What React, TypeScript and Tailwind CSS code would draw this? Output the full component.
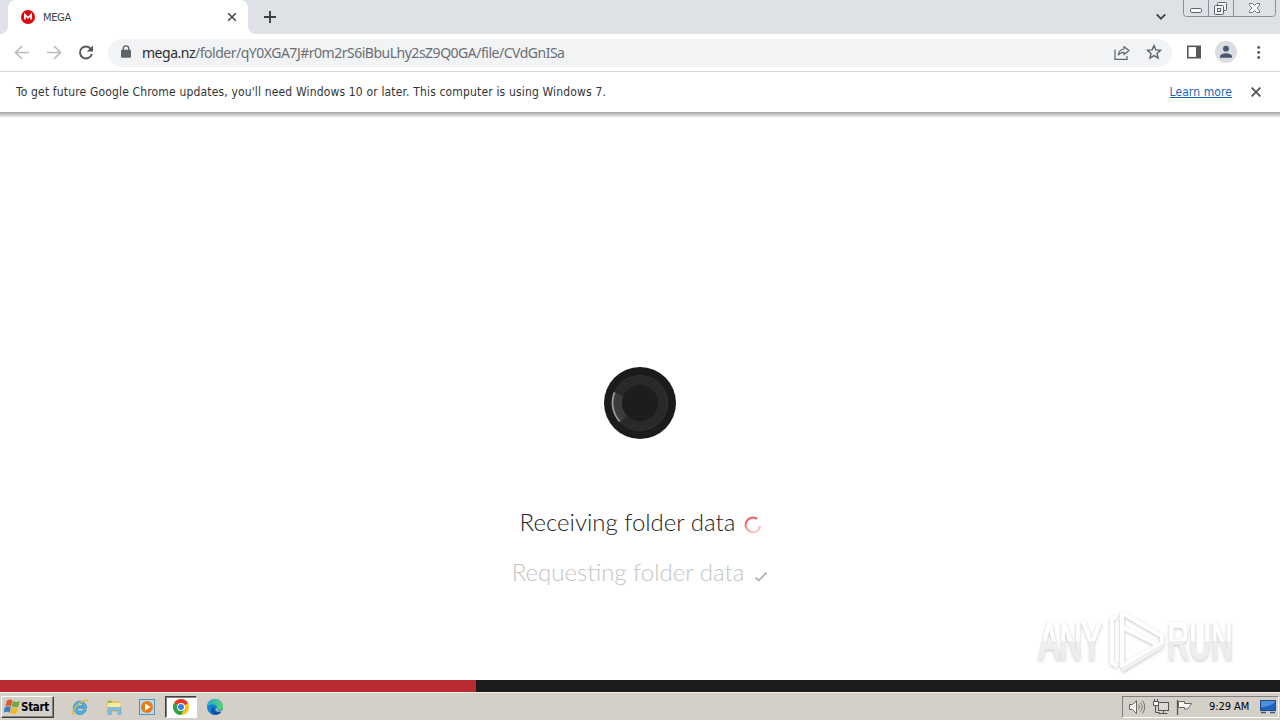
import React from "react";

const tahoma = "font-['DejaVu_Sans_Condensed','DejaVu_Sans',sans-serif]";

function TabStrip() {
  return (
    <div className="relative flex h-[34px] bg-[#dee1e6]">
      <svg className="w-2 h-[34px] shrink-0" viewBox="0 0 8 34">
        <path d="M8 26 A8 8 0 0 1 0 34 H8 Z" fill="#fff" />
      </svg>
      <div className="flex items-center w-60 h-full bg-white rounded-t-lg pl-[13px] pr-[11px]">
        <svg width="14" height="14" viewBox="0 0 14 14">
          <circle cx="7" cy="7" r="7" fill="#d9090f" />
          <path
            d="M3.9 9.6V4.7L7 7.8l3.1-3.1v4.9"
            fill="none"
            stroke="#fff"
            strokeWidth="1.7"
          />
        </svg>
        <span className="ml-2 mt-[2px] text-[11px] tracking-[-0.35px] text-[#3c4043]">
          MEGA
        </span>
        <svg className="ml-auto" width="10" height="10" viewBox="0 0 10 10">
          <path d="M1.2 1.2l7.6 7.6M8.8 1.2L1.2 8.8" stroke="#45494d" strokeWidth="1.6" />
        </svg>
      </div>
      <svg className="w-2 h-[34px] shrink-0" viewBox="0 0 8 34">
        <path d="M0 26 A8 8 0 0 0 8 34 H0 Z" fill="#fff" />
      </svg>
      <svg className="ml-2 mt-[11px]" width="12" height="12" viewBox="0 0 12 12">
        <path d="M6 0v12M0 6h12" stroke="#3c4043" strokeWidth="1.9" />
      </svg>
      <svg className="ml-auto mr-[17px] mt-[13px]" width="10" height="8" viewBox="0 0 10 8">
        <path d="M.7 1.4L5 5.7l4.3-4.3" fill="none" stroke="#3c4043" strokeWidth="1.7" />
      </svg>
      <svg className="mr-[3px]" width="94" height="18" viewBox="0 0 94 18">
        <path
          d="M.5 0v13.5q0 3 3 3h86q3 0 3-3V0M25.5 0v16M50.5 0v16"
          fill="none"
          stroke="#8d9096"
        />
        <rect x="7.5" y="8.5" width="11" height="4" rx="1" fill="#f7f8fa" stroke="#5f636b" />
        <g fill="#f1f3f5" stroke="#5f636b">
          <rect x="34.5" y="2.5" width="9" height="8" rx="1" />
          <rect x="31.5" y="5.5" width="9" height="9" rx="1" />
          <rect x="34.5" y="8.5" width="3" height="3" />
        </g>
        <path
          d="M66.5 3.5h3l2 2 2-2h3v2l-2.500 2.500 2.500 2.500v2h-3l-2-2-2 2h-3v-2l2.500-2.500-2.500-2.500z"
          fill="#f7f8fa"
          stroke="#777b82"
        />
      </svg>
    </div>
  );
}

function Toolbar() {
  return (
    <div className="flex items-center h-[38px] border-b border-[#d5d7da] bg-white">
      <svg className="ml-[14px]" width="16" height="16" viewBox="0 0 16 16">
        <path d="M15 7.500H2M8 1L1.500 7.500 8 14" fill="none" stroke="#b9bbbe" strokeWidth="1.700" />
      </svg>
      <svg className="ml-4" width="16" height="16" viewBox="0 0 16 16">
        <path d="M1 7.500h13M8 1l6.500 6.500L8 14" fill="none" stroke="#b9bbbe" strokeWidth="1.700" />
      </svg>
      <svg className="ml-4" width="16" height="16" viewBox="0 0 16 16">
        <path
          d="M13 4.200A6 6 0 1 0 13.800 8.900"
          fill="none"
          stroke="#55585c"
          strokeWidth="1.900"
        />
        <path d="M15 .4v6.200H8.800z" fill="#55585c" />
      </svg>
      <div className="flex items-center w-[1064px] h-7 ml-[14px] rounded-full bg-[#f1f3f4]">
        <svg className="ml-[13px] mb-px" width="10" height="14" viewBox="0 0 10 14">
          <path d="M2.300 5V3.600a2.700 2.700 0 0 1 5.400 0V5" fill="none" stroke="#5f6368" strokeWidth="1.400" />
          <rect x="0" y="4.700" width="10" height="8" rx="1" fill="#5f6368" />
        </svg>
        <span className="ml-[11px] text-[14px] tracking-[-0.49px] whitespace-nowrap text-[#6b6f74] font-['Noto_Sans','DejaVu_Sans',sans-serif]">
          <span className="text-[#2c2d30]">mega.nz</span>
          /folder/qY0XGA7J#r0m2rS6iBbuLhy2sZ9Q0GA/file/CVdGnISa
        </span>
        <svg className="ml-auto" width="16" height="16" viewBox="0 0 16 16">
          <path d="M1 4.500V14.400h12V11" fill="none" stroke="#5f6368" strokeWidth="1.200" />
          <path
            d="M10 1.700L15 5.500l-5 4V7.300c-2.700 0-4.300.8-5.700 2.700.4-3.500 2.300-5.600 5.700-6z"
            fill="none"
            stroke="#5f6368"
            strokeWidth="1.200"
            strokeLinejoin="round"
          />
        </svg>
        <svg className="ml-4 mr-[10px] mb-px" width="16" height="16" viewBox="0 0 16 16">
          <path
            d="M8 1.600l1.900 4.300 4.700.4-3.600 3.100 1.100 4.600L8 11.600 3.900 14 5 9.400 1.400 6.300l4.700-.4z"
            fill="none"
            stroke="#5f6368"
            strokeWidth="1.400"
          />
        </svg>
      </div>
      <svg className="ml-[15px] mb-px" width="14" height="14" viewBox="0 0 14 14">
        <rect x=".8" y="1.300" width="12.400" height="11.400" fill="none" stroke="#55585c" strokeWidth="1.600" />
        <path d="M9 1h5v12H9z" fill="#55585c" />
      </svg>
      <svg className="ml-[14px] mb-px" width="22" height="22" viewBox="0 0 22 22">
        <circle cx="11" cy="11" r="11" fill="#dadde2" />
        <circle cx="11" cy="7.700" r="2.900" fill="#4a5672" />
        <path d="M5 16.800v-1.500c0-2 4-3.100 6-3.100s6 1.100 6 3.100v1.500z" fill="#4a5672" />
      </svg>
      <svg className="ml-5" width="4" height="16" viewBox="0 0 4 16">
        <circle cx="1.700" cy="2.500" r="1.400" fill="#55585c" />
        <circle cx="1.700" cy="7.500" r="1.400" fill="#55585c" />
        <circle cx="1.700" cy="12.500" r="1.400" fill="#55585c" />
      </svg>
    </div>
  );
}

function InfoBar() {
  return (
    <div className="flex items-center h-10 pl-4 pr-[19px] text-[12px] text-[#333437] bg-white">
      <span className="tracking-[0.16px] whitespace-nowrap">
        To get future Google Chrome updates, you'll need Windows 10 or later.
        This computer is using Windows 7.
      </span>
      <a className="ml-auto mr-[19px] tracking-[0.1px] text-[#1967b8] underline whitespace-nowrap">
        Learn more
      </a>
      <svg width="10" height="10" viewBox="0 0 10 10">
        <path d="M.6.6l8.800 8.800M9.400.6L.6 9.400" stroke="#55585c" strokeWidth="1.900" />
      </svg>
    </div>
  );
}

function Loader() {
  return (
    <svg width="72" height="72" viewBox="0 0 72 72">
      <circle cx="36" cy="36" r="36" fill="#1b1b1b" />
      <circle cx="36" cy="36" r="27.500" fill="#292929" stroke="#333" />
      <path d="M10.100 25.200A28 28 0 0 0 15.800 55.400L23 49A18 18 0 0 1 19.200 29.500z" fill="#3c3c3c" />
      <circle cx="36" cy="36" r="18" fill="#1d1d1d" />
      <path
        d="M10.600 25.400A27.500 27.500 0 0 0 15.700 54.300"
        fill="none"
        stroke="#999"
        strokeWidth="1.800"
      />
    </svg>
  );
}

function Watermark() {
  return (
    <svg
      className="absolute left-[1028px] top-[600px]"
      width="230"
      height="84"
      viewBox="0 0 230 84"
    >
      <defs>
        <filter id="glow" x="-10%" y="-10%" width="120%" height="130%">
          <feDropShadow dx="0" dy="1" stdDeviation="1.500" floodColor="#555" floodOpacity=".38" />
        </filter>
        {/* letters: white on top, light grey below the middle */}
        <linearGradient id="fade" x1="0" y1="-38" x2="0" y2="0" gradientUnits="userSpaceOnUse">
          <stop offset=".52" stopColor="#fff" />
          <stop offset=".54" stopColor="#eee" />
        </linearGradient>
      </defs>
      <g filter="url(#glow)">
        <g
          fill="url(#fade)"
          stroke="url(#fade)"
          strokeWidth="1.600"
          fontFamily="'Liberation Sans', sans-serif"
          fontSize="52"
        >
          <text transform="translate(11 59) scale(.59 1)">ANY</text>
          <text transform="translate(139.500 59) scale(.58 1)">RUN</text>
        </g>
        <g fill="none" stroke="#fff" strokeWidth="4" strokeLinejoin="round">
          <path d="M94 62V13l40 23v7L94 66z" />
          <path d="M88 18h-4v45l5 3" />
          <path d="M94 27l34 17" />
          <path d="M94 70l40-24" stroke="#f1f1f1" />
        </g>
      </g>
    </svg>
  );
}

function Page() {
  return (
    <div className="flex flex-col items-center h-[568px] bg-white">
      <div className="w-full h-[6px] shrink-0 bg-linear-to-b from-[#a5a5a5] to-white" />
      <div className="mt-[249px]">
        <Loader />
      </div>
      <div className="flex items-center h-9 mt-[65px] pl-[2px] font-['Lato',sans-serif] font-light text-[24px] text-[#222]">
        <span className="whitespace-nowrap">Receiving folder data</span>
        <svg className="ml-[9px] mt-[6px]" width="18" height="18" viewBox="0 0 18 18">
          <defs>
            <linearGradient id="spin" x1="0" y1="0" x2=".5" y2="1">
              <stop offset="0" stopColor="#ed4a50" />
              <stop offset="1" stopColor="#f9c8cb" />
            </linearGradient>
          </defs>
          <path
            d="M13.300 3A7.300 7.300 0 1 0 16.200 10"
            fill="none"
            stroke="url(#spin)"
            strokeWidth="2.200"
          />
        </svg>
      </div>
      <div className="flex items-center h-9 mt-[14px] font-['Lato',sans-serif] font-light text-[24px] text-[#c4c4c4]">
        <span className="whitespace-nowrap">Requesting folder data</span>
        <svg className="ml-[10px] mt-[10px]" width="14" height="12" viewBox="0 0 14 12">
          <path d="M1.500 6.500l3.300 3L12.500 1.500" fill="none" stroke="#b5b5b5" strokeWidth="1.900" />
        </svg>
      </div>
    </div>
  );
}

function WindowsFlag() {
  return (
    <svg width="17" height="16" viewBox="0 0 17 16">
      <path d="M3 1.500c2-1.300 4-1.100 5.500 0L7.200 7.200C5.500 6.100 3.600 6.200 1.300 7.200z" fill="#e4572c" />
      <path d="M9 1.900c1.800 1 4.200 1.100 7 .1l-1.700 5.700c-2.200 1-4.400.8-6.600-.1z" fill="#76a93d" />
      <path d="M1 8c2.200-1 4.400-1 6 0l-1.500 5.700c-1.800-1.200-3.800-1-6 0z" fill="#3c7fc3" />
      <path d="M7.600 8.500c2 1 4.200 1.100 6.500.1l-1.600 5.600c-2 1-4.400.9-6.500-.1z" fill="#f2b81f" />
    </svg>
  );
}

function Taskbar() {
  return (
    <div className="flex items-center h-7 bg-[#d4d0c8] border-t border-[#f3f1ec] text-black">
      <div className="flex items-center w-[53px] h-[22px] mt-px ml-px pl-[2px] border border-t-white border-l-white border-r-[#404040] border-b-[#404040] shadow-[inset_-1px_-1px_0_#808080]">
        <WindowsFlag />
        <span className="mt-px text-[11.500px] font-bold tracking-[-0.3px]">Start</span>
      </div>
      {/* Internet Explorer */}
      <svg className="ml-[17px]" width="18" height="18" viewBox="0 0 18 18">
        <path
          d="M15.600 10.200H5.700a3.700 3.700 0 0 0 6.600 1.600h3A6.700 6.700 0 1 1 15.600 10.200zM5.700 7.800h6.600c-.6-3.200-5.900-3.300-6.600 0z"
          fill="#4db2e6"
          stroke="#2878b8"
          strokeWidth=".6"
        />
        <path
          d="M3.500 16c-3.500 1-2.500-4 3-9S17.500 0 16.600 4"
          fill="none"
          stroke="#e6b93c"
          strokeWidth="1.400"
        />
      </svg>
      {/* Explorer */}
      <svg className="ml-4" width="18" height="18" viewBox="0 0 18 18">
        <path d="M1.500 2h6l1 1.500h7V14h-14z" fill="#e3c25a" />
        <path d="M2.500 5h13v7h-13z" fill="#f8e9a4" />
        <path d="M3.500 3.200h3v1.800h-3z" fill="#6bb36b" />
        <path d="M3 16.500V9.500h13v7h-3v-4H6.500v4z" fill="#83bde0" stroke="#5a9cc8" strokeWidth=".5" />
      </svg>
      {/* Media player */}
      <svg className="ml-[15px]" width="18" height="18" viewBox="0 0 18 18">
        <rect x="1.500" y="1.500" width="15" height="15" fill="#b6dbf2" stroke="#5791bd" />
        <circle cx="9" cy="9" r="6" fill="#ee7b13" />
        <path d="M7 5.500v7L12.500 9z" fill="#fff" />
      </svg>
      {/* Chrome, active window */}
      <div className="flex items-center justify-center w-8 h-[22px] mt-px ml-[9px] bg-white border border-t-[#404040] border-l-[#404040] border-r-white border-b-white shadow-[inset_1px_1px_0_#808080]">
        <svg width="16" height="16" viewBox="0 0 16 16">
          <circle cx="8" cy="8" r="8" fill="#fbc116" />
          <path d="M8 8L1.070 4A8 8 0 0 1 14.930 4z" fill="#e33b2e" />
          <path d="M8 8L1.070 4A8 8 0 0 0 8 16l3.500-6z" fill="#2da14c" />
          <path d="M8 4h6.930L11.500 6z" fill="#e33b2e" />
          <circle cx="8" cy="8" r="4" fill="#fff" />
          <circle cx="8" cy="8" r="3" fill="#3c7ee8" />
        </svg>
      </div>
      {/* Edge */}
      <svg className="ml-[9px]" width="18" height="18" viewBox="0 0 18 18">
        <defs>
          <linearGradient id="edge" x1="0" y1="0" x2="1" y2=".3">
            <stop offset="0" stopColor="#1fa5dd" />
            <stop offset="1" stopColor="#5bd36b" />
          </linearGradient>
        </defs>
        <circle cx="9" cy="9" r="8" fill="#1280d3" />
        <path d="M1 9a8 8 0 0 1 16-.5c0 2.500-2 3.500-4.300 3.500-1.500 0-2.200-.7-1.500-1.700C11.700 6 3.500 4.500 1 9z" fill="url(#edge)" />
        <path d="M9 9c-3 3 1 6.500 6.300 4.500C13 17 9 17.500 6.500 15.500 3.500 12.500 6 9 9 9z" fill="#0d4f9e" />
        <path d="M11.300 9.500c-1.500 1.500-.2 3.300 2 3.200 1.500 0 2.700-.4 3.700-1.200v2H12c-2.500-.5-3-2.800-.7-4z" fill="#d4d0c8" />
      </svg>
      <div className="flex items-center w-[157px] h-[22px] mt-px ml-auto mr-px pl-[5px] border border-t-[#808080] border-l-[#808080] border-r-white border-b-white">
        <svg width="18" height="18" viewBox="0 0 18 18">
          <path d="M1.500 6.500h3l4-4v13l-4-4h-3z" fill="#f5f5f3" stroke="#666" />
          <path
            d="M10.500 6.500q2 2.500 0 5M12.500 4.500q3.500 4.500 0 9M14.500 2.500q4.500 6.500 0 13"
            fill="none"
            stroke="#777"
          />
        </svg>
        <svg className="ml-[6px]" width="18" height="18" viewBox="0 0 18 18">
          <rect x="6.500" y="4.500" width="10" height="8" fill="#d9d9d5" stroke="#555" />
          <path d="M11.500 13v2.500M6.500 15.500h9M3.500 8v6.500h4" fill="none" stroke="#555" />
          <path d="M1.500 3.500h5v4h-5zM2.500 1v2M5.500 1v2" fill="#f8f8f6" stroke="#555" />
        </svg>
        <svg className="ml-[6px]" width="18" height="18" viewBox="0 0 18 18">
          <path d="M1.500 2v15" stroke="#555" strokeWidth="1.300" />
          <path d="M2.500 3.500h6v2h7l-2 3-2 2.500H8.500V9.500h-6z" fill="#f8f8f6" stroke="#666" />
        </svg>
        <span className="ml-[15px] mt-px w-[42px] text-[11px] tracking-[-0.05px] whitespace-nowrap">
          9:29 AM
        </span>
        <svg className="ml-[9px]" width="16" height="14" viewBox="0 0 16 14">
          <rect x=".5" y=".5" width="15" height="10" fill="#1d63bd" stroke="#244c83" />
          <path d="M1 7Q8 8 15 2V1H1z" fill="#4a91dc" />
          <path d="M1 12.500h5M10 12.500h5" stroke="#315a86" strokeWidth="1.500" />
        </svg>
      </div>
    </div>
  );
}

function App() {
  return (
    <div className={`relative flex flex-col w-[1280px] h-[720px] overflow-hidden bg-white ${tahoma}`}>
      <TabStrip />
      <Toolbar />
      <InfoBar />
      <Page />
      <div className="flex h-3 bg-[#1c1c1c]">
        <div className="w-[476px] bg-[#b92b30]" />
      </div>
      <div className="grow">
        <Taskbar />
      </div>
      <Watermark />
    </div>
  );
}

export default App;
